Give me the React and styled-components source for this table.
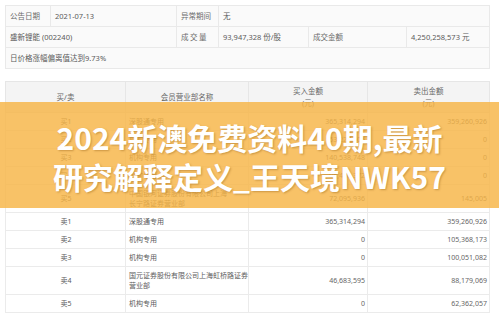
import React from "react";
import styled, { createGlobalStyle } from "styled-components";

const Global = createGlobalStyle`
  html, body { margin: 0; padding: 0; background: #ffffff; }
  body { font-family: "Noto Sans", "Noto Sans CJK SC", sans-serif; }
`;

const Page = styled.div`
  position: relative;
  width: 499px;
  height: 314px;
  overflow: hidden;
  background: #ffffff;
  padding: 5px 0 0 5px;
  box-sizing: border-box;
  display: flex;
  flex-direction: column;
  gap: 12px;
`;

const Table = styled.table`
  width: 484px;
  table-layout: fixed;
  border-collapse: collapse;
  border: 1px solid #e6e6e6;
  font-family: "Noto Sans", "Noto Sans CJK SC", sans-serif;
`;

const Col = styled.col`
  width: ${(p) => p.$w}px;
`;

const InfoCell = styled.td`
  border: 1px solid #e9e9e9;
  background: #fafafa;
  padding: 4px 4px;
  font-size: 7.5px;
  line-height: 12px;
  color: ${(p) => (p.$label ? "#6a6a6a" : "#5a5a5a")};
  white-space: nowrap;
  letter-spacing: ${(p) => (p.$spaced ? "1.5px" : "0")};
`;

const HeadCell = styled.th`
  border: 1px solid #e6e6e6;
  background: #f4f4f4;
  padding: 3px 3px;
  font-size: 7.5px;
  line-height: 12px;
  font-weight: 400;
  color: #666666;
  text-align: center;
`;

const Cell = styled.td`
  border: 1px solid #ebebeb;
  background: #ffffff;
  padding: 3.5px 2px 3.5px 3px;
  font-size: 7px;
  line-height: 10px;
  white-space: nowrap;
  overflow: hidden;
  color: ${(p) => (p.$num ? "#666666" : "#5c5c5c")};
  text-align: ${(p) => p.$align || "left"};
`;

const Overlay = styled.div`
  position: absolute;
  left: 0;
  right: 0;
  top: 102px;
  height: 106px;
  background: rgba(247, 180, 70, 0.82);
  display: flex;
  align-items: center;
  justify-content: center;
`;

const Title = styled.div`
  font-family: "Noto Sans CJK SC", "Noto Sans", sans-serif;
  font-weight: 700;
  font-size: 30px;
  line-height: 39px;
  color: #ffffff;
  text-align: center;
  text-shadow: 1px 1px 2px rgba(120, 70, 0, 0.35);
  margin-top: 3px;
`;

const trades = [
  ["买1", "深股通专用", "365,314,294", "359,260,926"],
  ["买2", "机构专用", "153,227,506", "0"],
  ["买3", "机构专用", "140,538,748", "0"],
  ["买4", "机构专用", "96,410,372", "0"],
  ["买5", ["中国银河证券股份有限公司上海", "长宁路证券营业部"], "72,095,936", "145,005"],
  ["卖1", "深股通专用", "365,314,294", "359,260,926"],
  ["卖2", "机构专用", "0", "105,368,173"],
  ["卖3", "机构专用", "0", "100,051,082"],
  ["卖4", ["国元证券股份有限公司上海虹桥路证券", "营业部"], "46,683,595", "88,179,069"],
  ["卖5", "机构专用", "0", "62,362,057"],
];

export default function App() {
  return (
    <>
      <Global />
      <Page>
        <Table>
          <colgroup>
            <Col $w={45} />
            <Col $w={126} />
            <Col $w={42} />
            <Col $w={90} />
            <Col $w={98} />
            <Col $w={83} />
          </colgroup>
          <tbody>
            <tr>
              <InfoCell $label>公告日期</InfoCell>
              <InfoCell>2021-07-13</InfoCell>
              <InfoCell $label>异常期间</InfoCell>
              <InfoCell colSpan={3}>无</InfoCell>
            </tr>
            <tr>
              <InfoCell colSpan={2}>盛新锂能 (002240)</InfoCell>
              <InfoCell $label $spaced>成交量</InfoCell>
              <InfoCell>93,947,328 份/股</InfoCell>
              <InfoCell $label>成交金额</InfoCell>
              <InfoCell>4,250,258,573 元</InfoCell>
            </tr>
            <tr>
              <InfoCell colSpan={6}>日价格涨幅偏离值达到9.73%</InfoCell>
            </tr>
          </tbody>
        </Table>

        <Table>
          <colgroup>
            <Col $w={120} />
            <Col $w={123} />
            <Col $w={119} />
            <Col $w={122} />
          </colgroup>
          <thead>
            <tr>
              <HeadCell>买/卖</HeadCell>
              <HeadCell>会员营业部名称</HeadCell>
              <HeadCell>
                买入金额
                <br />
                (元)
              </HeadCell>
              <HeadCell>
                卖出金额
                <br />
                (元)
              </HeadCell>
            </tr>
          </thead>
          <tbody>
            {trades.map(([side, name, buy, sell], i) => (
              <tr key={i}>
                <Cell $align="center">{side}</Cell>
                <Cell>
                  {Array.isArray(name) ? (
                    <>
                      {name[0]}
                      <br />
                      {name[1]}
                    </>
                  ) : (
                    name
                  )}
                </Cell>
                <Cell $align="right" $num>
                  {buy}
                </Cell>
                <Cell $align="right" $num>
                  {sell}
                </Cell>
              </tr>
            ))}
          </tbody>
        </Table>

        <Overlay>
          <Title>
            2024新澳免费资料40期,最新
            <br />
            研究解释定义_王天境NWK57
          </Title>
        </Overlay>
      </Page>
    </>
  );
}
